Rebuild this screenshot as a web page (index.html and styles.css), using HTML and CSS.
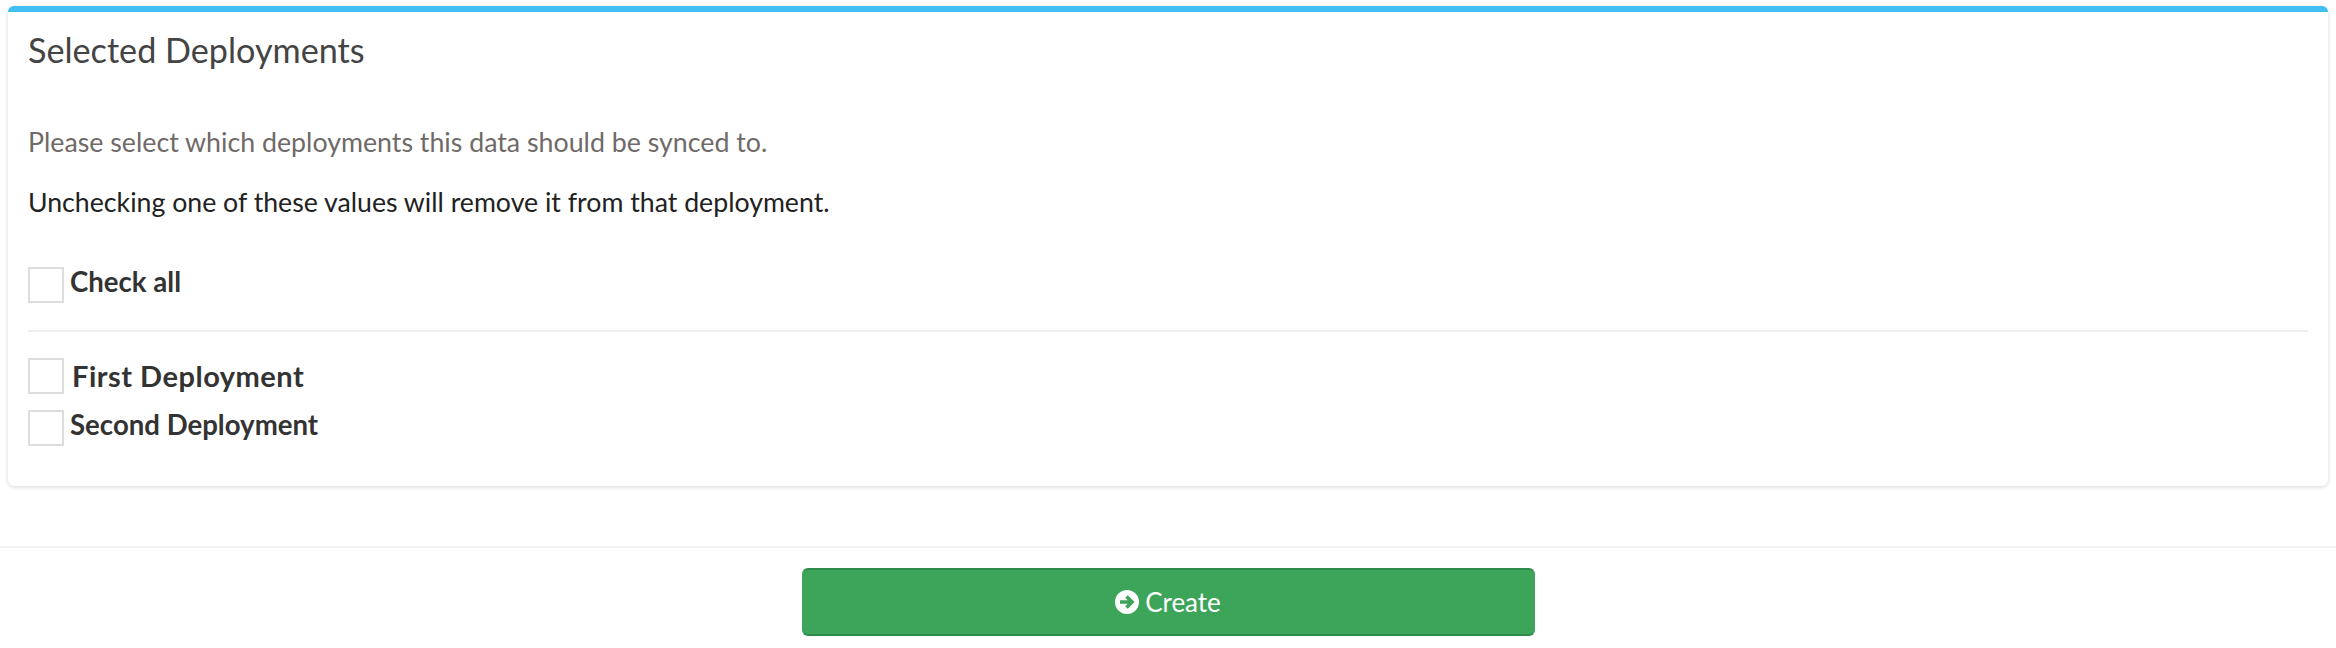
FILE: index.html
```html
<!DOCTYPE html>
<html lang="en">
<head>
  <meta charset="UTF-8">
  <title>Selected Deployments</title>
  <link rel="stylesheet" href="styles.css">
</head>
<body>
  <div class="box">
    <h3 class="box-title">Selected Deployments</h3>
    <div class="box-body">
      <p class="help">Please select which deployments this data should be synced to.</p>
      <p class="note">Unchecking one of these values will remove it from that deployment.</p>
      <div class="check-row all">
        <span class="check"></span>
        <label class="check-label">Check all</label>
      </div>
      <hr class="divider">
      <div class="check-row first">
        <span class="check"></span>
        <label class="check-label large">First Deployment</label>
      </div>
      <div class="check-row second">
        <span class="check"></span>
        <label class="check-label">Second Deployment</label>
      </div>
    </div>
  </div>
  <footer class="actions">
    <button class="btn-create" type="button">
      <svg class="btn-icon" viewBox="0 0 24 24" aria-hidden="true">
        <circle cx="12" cy="12" r="12" fill="#fff"/>
        <path d="M5 12h11.5M11.5 6.5l5.5 5.5-5.5 5.5" fill="none" stroke="#3ca55a" stroke-width="3.6"/>
      </svg>
      Create
    </button>
  </footer>
</body>
</html>
```

FILE: styles.css
```css
body {
  font-family: "Lato", "Open Sans", sans-serif;
  background-color: #fff;
  color: #333;
  margin: 0;
  padding: 0;
}
.box {
  margin: 6px 8px 0;
  height: 480px;
  box-sizing: border-box;
  background: #fff;
  border-top: 6px solid #3fc0f0;
  border-radius: 6px;
  box-shadow: 0 1px 4px rgba(0, 0, 0, 0.16);
}
.box-title {
  margin: 0;
  padding: 18px 20px 0;
  font-size: 34.2px;
  line-height: 40px;
  font-weight: 400;
  color: #444;
}
.box-body {
  padding: 0 20px;
}
.help {
  margin: 56px 0 0;
  font-size: 26.75px;
  line-height: 32px;
  color: #6f6a68;
}
.note {
  margin: 28px 0 0;
  font-size: 26.7px;
  line-height: 32px;
  color: #222;
}
.check-row {
  display: flex;
  align-items: flex-start;
  gap: 6px;
}
.check-row.all {
  margin-top: 49px;
}
.check-row.first {
  margin-top: 26px;
}
.check-row.second {
  margin-top: 16px;
}
.check {
  flex: none;
  box-sizing: border-box;
  width: 36px;
  height: 36px;
  border: 2px solid #ddd;
  background: #fff;
}
.check-label {
  font-size: 27.6px;
  line-height: 30px;
  font-weight: 700;
  color: #333;
}
.check-label.large {
  font-size: 29px;
  line-height: 36px;
  letter-spacing: 0.5px;
  margin-left: 2px;
}
.divider {
  border: 0;
  border-top: 2px solid #eee;
  margin: 27px 0 0;
}
.actions {
  margin-top: 60px;
  padding-top: 20px;
  border-top: 2px solid #f2f2f2;
  display: flex;
  justify-content: center;
}
.btn-create {
  width: 733px;
  height: 68px;
  display: flex;
  align-items: center;
  justify-content: center;
  gap: 6px;
  font-family: inherit;
  font-size: 26px;
  color: #fff;
  background-color: #3ca55a;
  border: 1px solid #3ca55a;
  border-top: 2px solid #2e8b4a;
  border-bottom: 2px solid #2e8b4a;
  border-radius: 6px;
}
.btn-icon {
  width: 24px;
  height: 24px;
}
```
